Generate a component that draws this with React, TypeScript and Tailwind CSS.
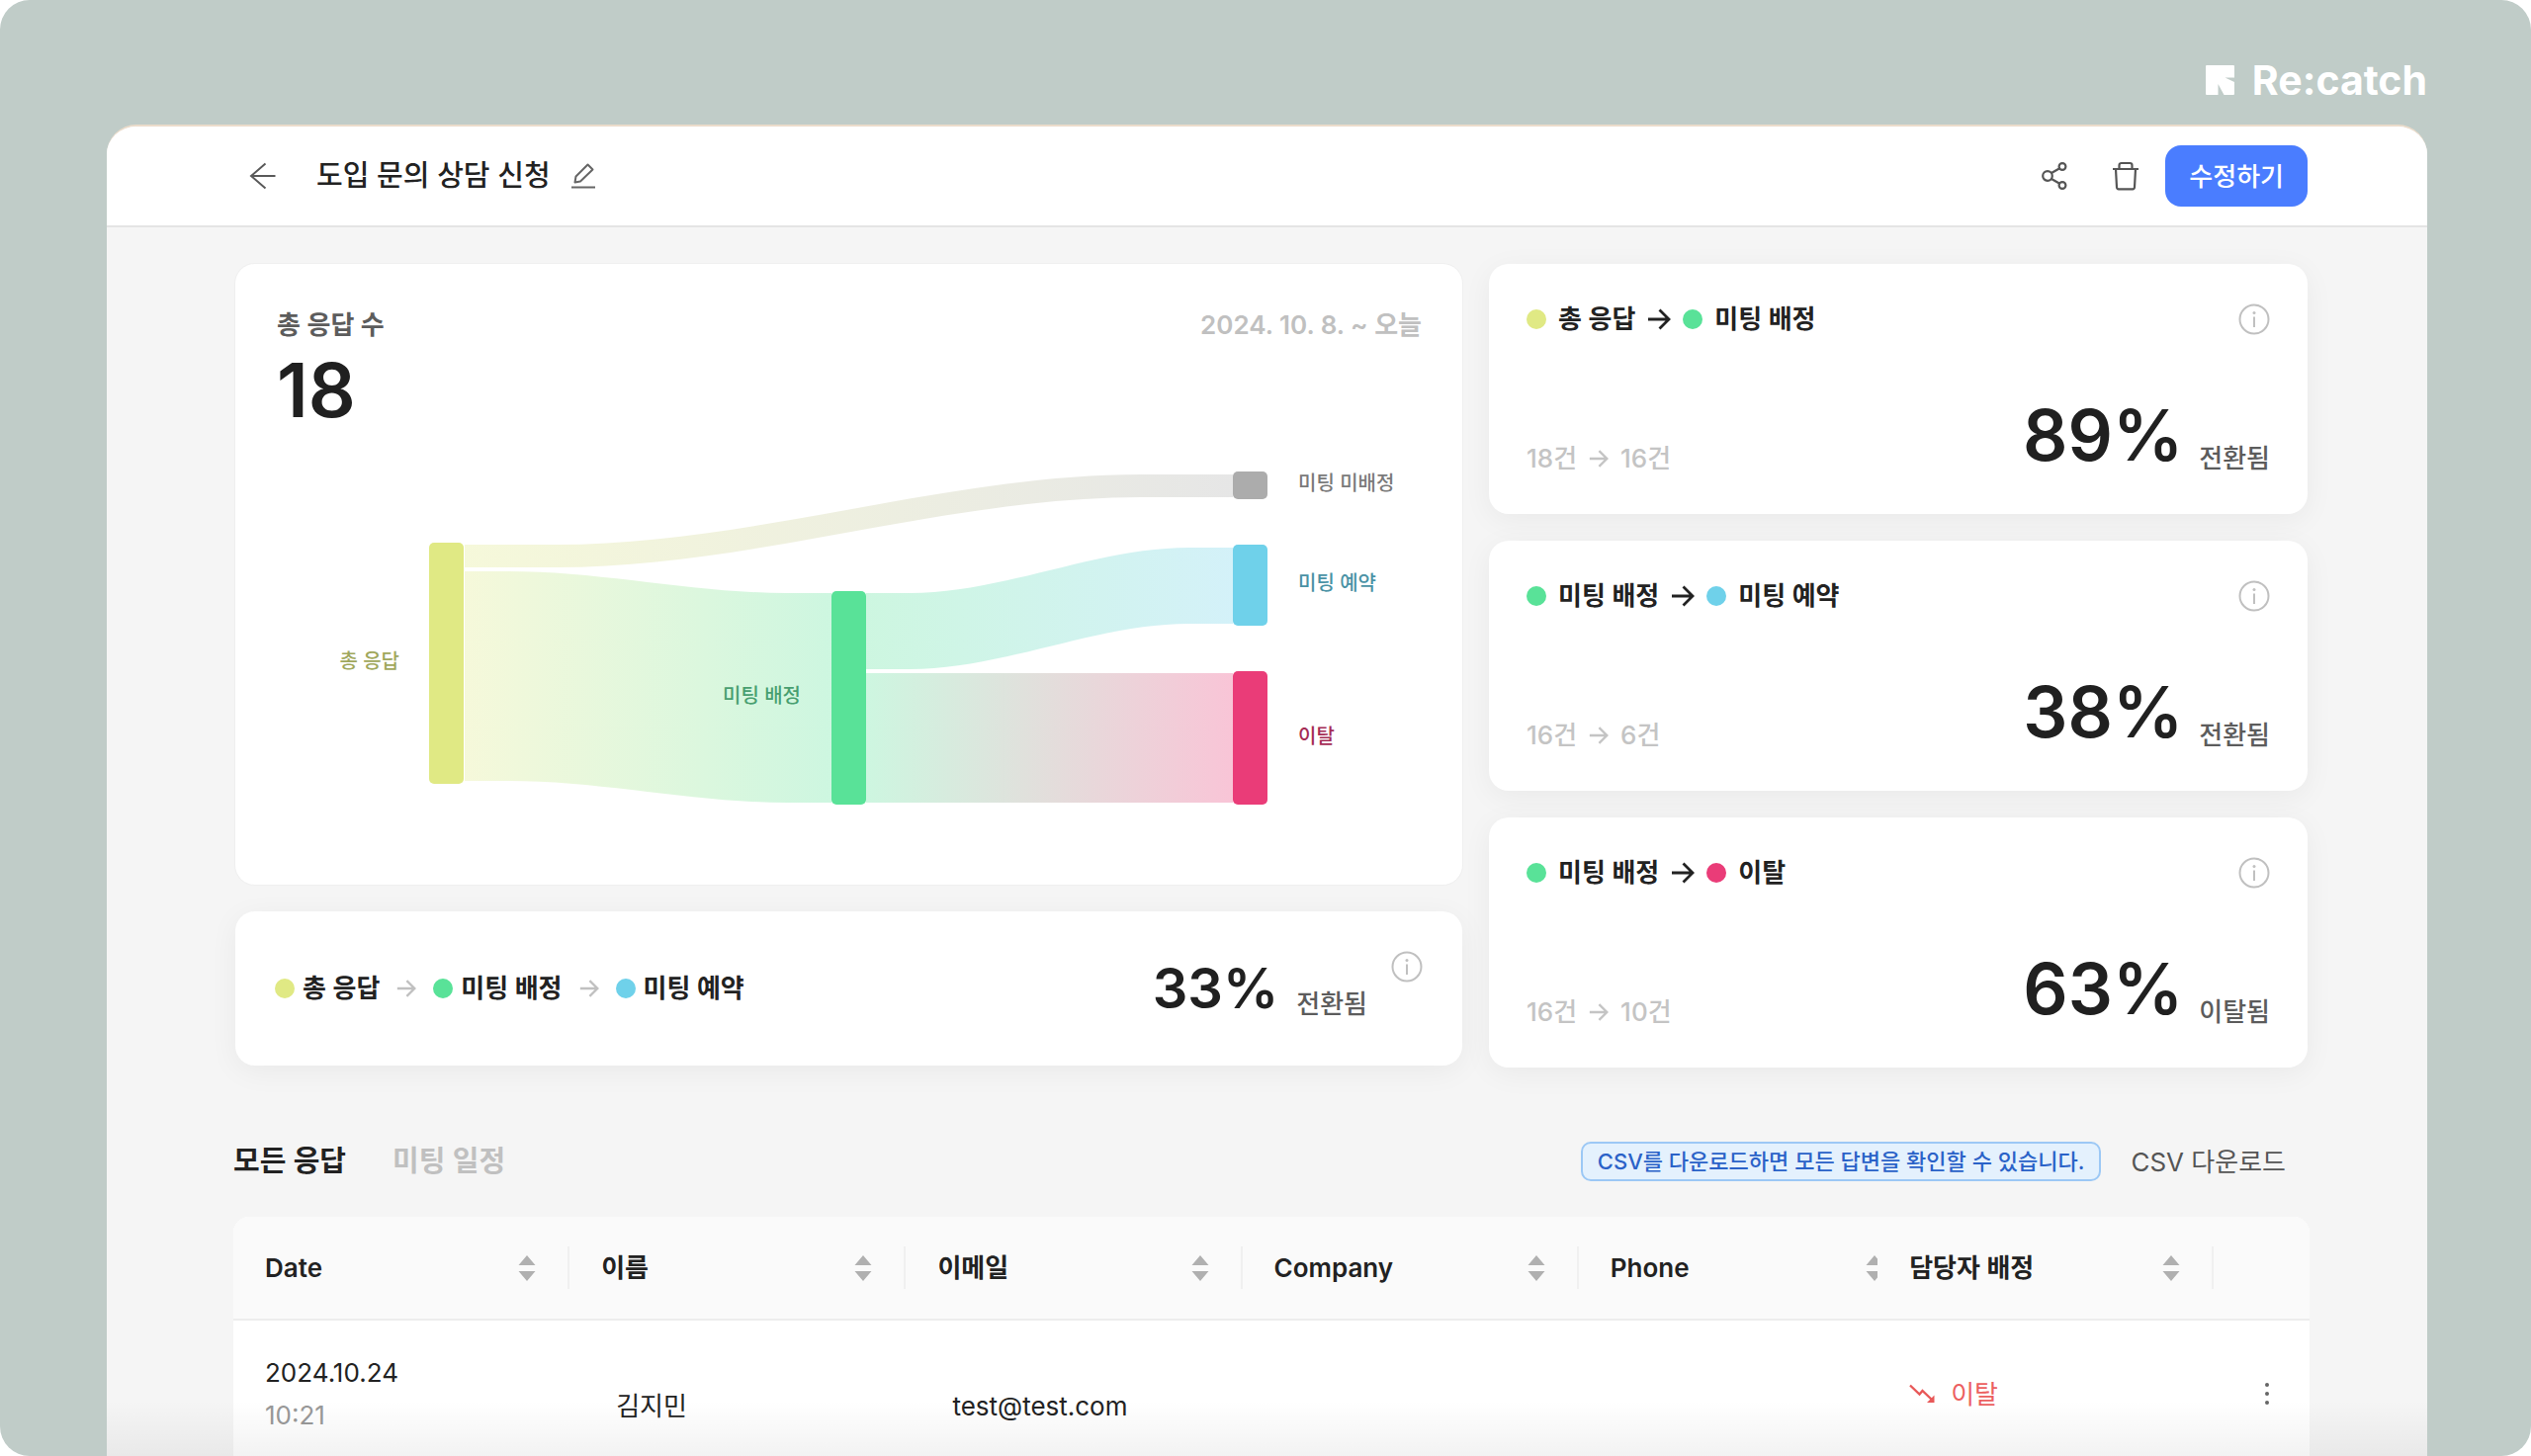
import type { ReactNode } from 'react';

type IconProps = { className?: string };

function BackIcon() {
  return (
    <svg viewBox="0 0 28 28" className="size-7" fill="none" stroke="#5a5a5a" strokeWidth="2">
      <path d="M26.500 14H2.500M16.500 1.500 2 14l14.500 12.500" />
    </svg>
  );
}

function EditIcon() {
  return (
    <svg viewBox="0 0 26 28" className="h-7 w-[26px]" fill="none" stroke="#666" strokeWidth="2">
      <path d="M1 25.500h24" />
      <path d="m4.500 20.500 1-6L17.500 2.500l5 5-12.500 12Z" strokeLinejoin="round" />
    </svg>
  );
}

function ShareIcon() {
  return (
    <svg viewBox="0 0 28 30" className="h-[30px] w-7" fill="none" stroke="#555" strokeWidth="2.200">
      <circle cx="7" cy="15" r="4.800" />
      <circle cx="22" cy="5.500" r="3.400" />
      <circle cx="22" cy="24.500" r="3.400" />
      <path d="m11 12 8.300-4.800M11 18l8.300 4.800" />
    </svg>
  );
}

function TrashIcon() {
  return (
    <svg viewBox="0 0 28 30" className="h-[30px] w-7" fill="none" stroke="#555" strokeWidth="2.200" strokeLinejoin="round">
      <path d="M1 8h26M7.500 7.500V4.200A2.200 2.200 0 0 1 9.700 2h8.600a2.200 2.200 0 0 1 2.200 2.200v3.300" />
      <path d="m4 8 1 18.500A1.800 1.800 0 0 0 6.800 28.300h14.400a1.800 1.800 0 0 0 1.800-1.800L24 8" />
    </svg>
  );
}

function ArrowIcon({ className }: IconProps) {
  return (
    <svg viewBox="0 0 24 24" className={className} fill="none" stroke="currentColor" strokeWidth="2.800">
      <path d="M1 12h21M12.500 2.500 22 12l-9.500 9.500" />
    </svg>
  );
}

function InfoIcon() {
  return (
    <svg viewBox="0 0 32 32" className="size-8" fill="none" stroke="#c0c0c0" strokeWidth="2">
      <circle cx="16" cy="16" r="14.500" />
      <path d="M16 13.500V24" />
      <circle cx="16" cy="9.500" r="1.500" fill="#c0c0c0" stroke="none" />
    </svg>
  );
}

function SortIcon() {
  return (
    <svg viewBox="0 0 18 28" className="h-7 w-[18px] shrink-0" fill="#b0b0b0">
      <path d="M9 1l8.500 10H.5ZM9 27l8.500-10H.5Z" />
    </svg>
  );
}

function FallIcon() {
  return (
    <svg viewBox="0 0 28 20" className="h-5 w-7" fill="none" stroke="#e85858" strokeWidth="2.400">
      <path d="m1 1.500 9.500 9 3-3.500L23 16" />
      <path d="M25.500 11.500V19H18Z" fill="#e85858" stroke="none" />
    </svg>
  );
}

function LogoMark() {
  return (
    <svg viewBox="0 0 29 30" className="h-[30px] w-[29px]" fill="#fff">
      <path d="M1 0h27a1 1 0 0 1 1 1v11.500h-9.500l9.500 4.500v12a1 1 0 0 1-1 1H18.500L12.500 19V30H1a1 1 0 0 1-1-1V1a1 1 0 0 1 1-1Z" />
    </svg>
  );
}

const yellow = '#e0e984';
const green = '#59e298';
const blue = '#6fd1ea';
const pink = '#ea3c78';
const gray = '#acacac';

const dotClass = {
  yellow: 'bg-[#e0e984]',
  green: 'bg-[#59e298]',
  blue: 'bg-[#6fd1ea]',
  pink: 'bg-[#ea3c78]',
};
type Stage = { color: keyof typeof dotClass; label: string };

const total: Stage = { color: 'yellow', label: '총 응답' };
const assigned: Stage = { color: 'green', label: '미팅 배정' };
const booked: Stage = { color: 'blue', label: '미팅 예약' };
const lost: Stage = { color: 'pink', label: '이탈' };

/** Ribbon between two nodes; a0/a1 and b0/b1 are its top and bottom at each end. */
function ribbon(x0: number, a0: number, a1: number, x1: number, b0: number, b1: number) {
  const flat = (x1 - x0) * 0.12;
  const l = x0 + flat;
  const r = x1 - flat;
  const d = (r - l) / 3;
  return `M${x0} ${a0}H${l}C${l + d} ${a0} ${r - d} ${b0} ${r} ${b0}H${x1}V${b1}H${r}C${r - d} ${b1} ${l + d} ${a1} ${l} ${a1}H${x0}Z`;
}

const links = [
  { id: 'total-unassigned', from: yellow, to: gray, d: ribbon(190, 112, 135, 967, 41, 64) },
  { id: 'total-assigned', from: yellow, to: green, d: ribbon(190, 139, 351, 561, 161, 373) },
  { id: 'assigned-booked', from: green, to: blue, d: ribbon(596, 161, 238, 967, 115, 192) },
  { id: 'assigned-lost', from: green, to: pink, d: ribbon(596, 242, 373, 967, 242, 373) },
];

const nodes = [
  { x: 154, y: 110, h: 244, fill: yellow, label: '총 응답', color: '#a0a75c', tx: 124, ty: 237, anchor: 'end' as const },
  { x: 561, y: 159, h: 216, fill: green, label: '미팅 배정', color: '#489f70', tx: 530, ty: 272, anchor: 'end' as const },
  { x: 967, y: 38, h: 28, fill: gray, label: '미팅 미배정', color: '#7a7a7a', tx: 1033, ty: 57, anchor: 'start' as const },
  { x: 967, y: 112, h: 82, fill: blue, label: '미팅 예약', color: '#4a92a5', tx: 1033, ty: 158, anchor: 'start' as const },
  { x: 967, y: 240, h: 135, fill: pink, label: '이탈', color: '#a52c55', tx: 1033, ty: 313, anchor: 'start' as const },
];

function Sankey() {
  return (
    <svg viewBox="0 0 1158 416" className="mt-2 w-full" role="img" aria-label="응답 흐름">
      <defs>
        {links.map((l) => (
          <linearGradient key={l.id} id={l.id}>
            <stop offset="0" stopColor={l.from} />
            <stop offset="1" stopColor={l.to} />
          </linearGradient>
        ))}
      </defs>
      {links.map((l) => (
        <path key={l.id} d={l.d} fill={`url(#${l.id})`} opacity="0.3" />
      ))}
      {nodes.map((n) => (
        <g key={n.label}>
          <rect x={n.x} y={n.y} width="35" height={n.h} rx="5" fill={n.fill} />
          <text x={n.tx} y={n.ty} textAnchor={n.anchor} fill={n.color} fontSize="20" fontWeight="500">
            {n.label}
          </text>
        </g>
      ))}
    </svg>
  );
}

function Dot({ color }: { color: keyof typeof dotClass }) {
  return <span className={`size-5 rounded-full ${dotClass[color]}`} />;
}

const shadowCard = 'rounded-[20px] bg-white shadow-[0_6px_30px_rgba(0,0,0,0.05)]';

type StatProps = { from: Stage; to: Stage; before: string; after: string; percent: string; result: string };

function StatCard({ from, to, before, after, percent, result }: StatProps) {
  return (
    <article className={`px-[38px] py-10 ${shadowCard}`}>
      <div className="flex items-center justify-between">
        <h2 className="flex items-center text-[26px] leading-8 font-semibold text-[#222]">
          <Dot color={from.color} />
          <span className="ml-3">{from.label}</span>
          <ArrowIcon className="mx-3 size-6" />
          <Dot color={to.color} />
          <span className="ml-3">{to.label}</span>
        </h2>
        <button type="button" aria-label="도움말"><InfoIcon /></button>
      </div>
      <div className="mt-[61px] flex items-end justify-between text-[26px] leading-8 font-medium">
        <p className="flex items-center text-[#c4c4c4]">
          {before}
          <ArrowIcon className="mx-3 size-5" />
          {after}
        </p>
        <p className="flex items-end gap-4 text-[#5c5c5c]">
          <strong className="text-[71px] leading-[80px] font-semibold text-[#202020]">{percent}</strong>
          {result}
        </p>
      </div>
    </article>
  );
}

function Th({ children, last }: { children: ReactNode; last?: boolean }) {
  return (
    <th scope="col" className="overflow-hidden border-b-2 border-[#ededed] px-0 py-[30px] text-left font-semibold">
      <div className={`flex h-[43px] items-center justify-between px-8 ${last ? 'w-[340px]' : 'border-r-2 border-[#f0f0f0]'}`}>
        {children}
        <button type="button" aria-label="정렬"><SortIcon /></button>
      </div>
    </th>
  );
}

export default function App() {
  return (
    <div
      className="relative flex h-screen flex-col overflow-hidden rounded-[30px] bg-[#c0ccc8] pr-[105px] pl-[108px] text-[#222]"
      style={{ fontFamily: 'Inter, "Noto Sans CJK KR", sans-serif' }}
    >
      <div className="flex h-[126px] shrink-0 items-center justify-end gap-[18px] pt-9">
        <LogoMark />
        <span className="text-[41px] leading-none font-bold text-white">Re:catch</span>
      </div>

      <main className="relative flex-1 overflow-hidden rounded-t-[30px] border-t-2 border-[#ebdccb] bg-[#f5f5f5]">
        <header className="flex h-[102px] items-center border-b-2 border-[#e4e4e4] bg-white pr-[121px] pl-[144px]">
          <button type="button" aria-label="뒤로"><BackIcon /></button>
          <h1 className="ml-10 text-[29px] leading-10 font-medium">도입 문의 상담 신청</h1>
          <button type="button" aria-label="이름 수정" className="ml-5"><EditIcon /></button>
          <div className="ml-auto flex items-center">
            <button type="button" aria-label="공유"><ShareIcon /></button>
            <button type="button" aria-label="삭제" className="ml-11"><TrashIcon /></button>
            <button type="button" className="ml-[26px] h-[62px] rounded-2xl bg-[#4a7dff] px-6 text-[26px] font-medium text-white">
              수정하기
            </button>
          </div>
        </header>

        <div className="pt-[37px] pr-[119px] pl-[128px]">
          <section className="grid grid-cols-[1241fr_828fr] gap-[27px] px-0.5">
            <div className="flex flex-col gap-[27px] pb-0.5">
              <article className="flex-1 rounded-[20px] bg-white pt-[42px] pr-[41px] pl-[42px] shadow-[0_0_0_1px_#efefef]">
                <div className="flex items-center justify-between text-[26px] leading-10 font-semibold">
                  <h2 className="text-[#5c5c5c]">총 응답 수</h2>
                  <p className="text-[#c0c0c0]">2024. 10. 8. ~ 오늘</p>
                </div>
                <p className="mt-2.5 text-[75px] leading-[72px] font-semibold text-[#202020]">18</p>
                <Sankey />
              </article>
              <article className={`flex h-[156px] items-center justify-between pr-10 pl-10 ${shadowCard}`}>
                <h2 className="flex items-center text-[26px] leading-8 font-semibold">
                  <Dot color={total.color} />
                  <span className="ml-2">{total.label}</span>
                  <ArrowIcon className="mx-[17px] size-5 text-[#c0c0c0]" />
                  <Dot color={assigned.color} />
                  <span className="ml-2">{assigned.label}</span>
                  <ArrowIcon className="mx-[17px] size-5 text-[#c0c0c0]" />
                  <Dot color={booked.color} />
                  <span className="ml-2">{booked.label}</span>
                </h2>
                <div className="flex h-[76px] items-start">
                  <p className="flex items-end gap-[18px] self-center text-[26px] leading-8 font-medium text-[#5c5c5c]">
                    <strong className="text-[56px] leading-[64px] font-semibold text-[#202020]">33%</strong>
                    전환됨
                  </p>
                  <button type="button" aria-label="도움말" className="ml-6"><InfoIcon /></button>
                </div>
              </article>
            </div>
            <div className="flex flex-col gap-[27px]">
              <StatCard from={total} to={assigned} before="18건" after="16건" percent="89%" result="전환됨" />
              <StatCard from={assigned} to={booked} before="16건" after="6건" percent="38%" result="전환됨" />
              <StatCard from={assigned} to={lost} before="16건" after="10건" percent="63%" result="이탈됨" />
            </div>
          </section>

          <nav className="mt-[75px] flex h-10 items-center text-[29px] font-semibold">
            <button type="button">모든 응답</button>
            <button type="button" className="ml-[47px] text-[#c0c0c0]">미팅 일정</button>
            <span className="ml-auto flex h-10 items-center rounded-[10px] border-2 border-[#9cc8f5] bg-[#e4f1fd] px-[15px] text-[22px] font-medium text-[#2a62c8]">
              CSV를 다운로드하면 모든 답변을 확인할 수 있습니다.
            </span>
            <button type="button" className="mr-6 ml-[30px] text-[26px] font-normal text-[#555]">CSV 다운로드</button>
          </nav>

          <table className="mt-9 w-full table-fixed border-separate border-spacing-0 overflow-hidden rounded-t-2xl bg-white text-[26px]">
            <colgroup>
              <col className="w-[16.2%]" />
              <col className="w-[16.2%]" />
              <col className="w-[16.2%]" />
              <col className="w-[16.2%]" />
              <col className="w-[14.4%]" />
              <col className="w-[16.2%]" />
              <col />
            </colgroup>
            <thead className="bg-[#fafafa]">
              <tr>
                <Th>Date</Th>
                <Th>이름</Th>
                <Th>이메일</Th>
                <Th>Company</Th>
                <Th last>Phone</Th>
                <Th>담당자 배정</Th>
                <td className="border-b-2 border-[#ededed]" />
              </tr>
            </thead>
            <tbody>
              <tr>
                <td className="px-8 py-[31px] leading-[43px]">
                  2024.10.24
                  <div className="text-[#999]">10:21</div>
                </td>
                <td className="pt-6 pl-[47px]">김지민</td>
                <td className="pt-6 pl-[47px]">test@test.com</td>
                <td />
                <td />
                <td className="pl-8">
                  <span className="flex items-center gap-3.5 text-[#ec5f5f]">
                    <FallIcon />
                    이탈
                  </span>
                </td>
                <td>
                  <button type="button" aria-label="더보기" className="ml-[52px] flex flex-col gap-[5px]">
                    <span className="size-1 rounded-full bg-[#666]" />
                    <span className="size-1 rounded-full bg-[#666]" />
                    <span className="size-1 rounded-full bg-[#666]" />
                  </button>
                </td>
              </tr>
            </tbody>
          </table>
        </div>
        <div className="pointer-events-none absolute inset-x-0 bottom-0 h-14 bg-linear-to-b from-black/0 to-black/5" />
      </main>
    </div>
  );
}
